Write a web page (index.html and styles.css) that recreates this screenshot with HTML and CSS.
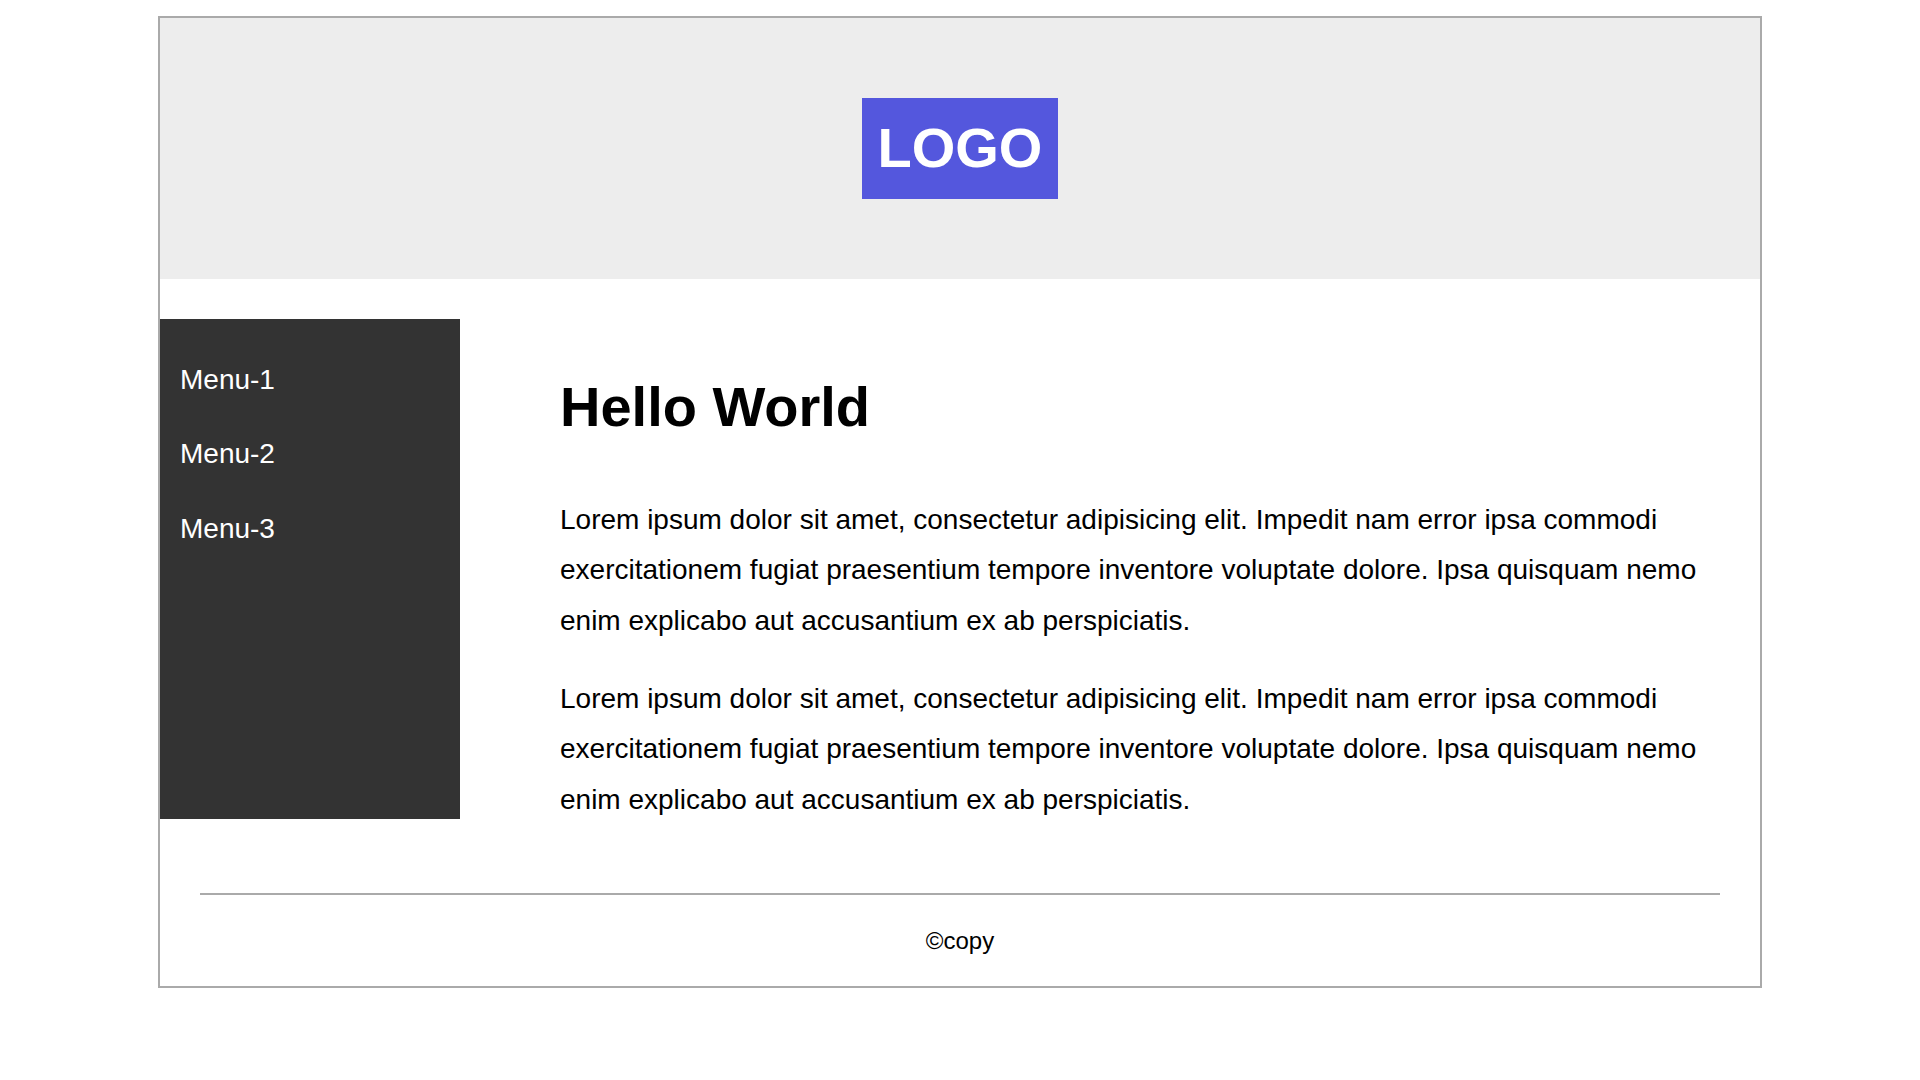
FILE: index.html
```html
<!DOCTYPE html>
<html lang="en">
<head>
<meta charset="utf-8">
<title>Layout</title>
<link rel="stylesheet" href="styles.css">
</head>
<body>
<div class="page">
  <header class="header">
    <div class="logo">LOGO</div>
  </header>
  <div class="body">
    <nav class="sidebar">
      <ul class="menu">
        <li class="menu-item">Menu-1</li>
        <li class="menu-item">Menu-2</li>
        <li class="menu-item">Menu-3</li>
      </ul>
    </nav>
    <main class="main">
      <h1 class="title">Hello World</h1>
      <p class="text">Lorem ipsum dolor sit amet, consectetur adipisicing elit. Impedit nam error ipsa commodi exercitationem fugiat praesentium tempore inventore voluptate dolore. Ipsa quisquam nemo enim explicabo aut accusantium ex ab perspiciatis.</p>
      <p class="text">Lorem ipsum dolor sit amet, consectetur adipisicing elit. Impedit nam error ipsa commodi exercitationem fugiat praesentium tempore inventore voluptate dolore. Ipsa quisquam nemo enim explicabo aut accusantium ex ab perspiciatis.</p>
    </main>
  </div>
  <footer class="footer">
    <div class="footer-rule"></div>
    <p class="copy">&copy;copy</p>
  </footer>
</div>
</body>
</html>
```

FILE: styles.css
```css
* {
  box-sizing: border-box;
}

html, body {
  margin: 0;
  padding: 0;
  background: #ffffff;
}

body {
  font-family: "Liberation Sans", Arial, sans-serif;
  font-size: 28px;
  line-height: 1.8;
  color: #000;
}

.page {
  width: 1604px;
  margin: 16px auto 0;
  border: 2px solid #aaaaaa;
}

.header {
  background: #ededed;
  padding: 80px 0;
  display: flex;
  justify-content: center;
}

.logo {
  background: #5457dd;
  color: #fff;
  font-weight: bold;
  font-size: 56px;
  line-height: 99px;
  height: 101px;
  width: 196px;
  text-align: center;
}

.body {
  display: flex;
  align-items: flex-start;
  margin: 40px 0;
}

.sidebar {
  width: 300px;
  height: 500px;
  flex: none;
  background: #333333;
  padding-top: 24px;
}

.menu {
  list-style: none;
  margin: 0;
  padding: 0;
}

.menu-item {
  color: #fff;
  font-size: 28px;
  line-height: 50.4px;
  padding: 12px 20px;
}

.main {
  flex: 1;
  padding: 0 40px 0 100px;
}

.title {
  font-size: 56px;
  line-height: 1.8;
  font-weight: bold;
  margin: 37.5px 0;
}

.text {
  margin: 28px 0;
}

.footer {
  padding: 0 40px;
}

.footer-rule {
  height: 2px;
  background: #aaaaaa;
}

.copy {
  font-size: 24px;
  line-height: 1.8;
  text-align: center;
  margin: 0;
  padding: 24px 0 24px;
}
```
